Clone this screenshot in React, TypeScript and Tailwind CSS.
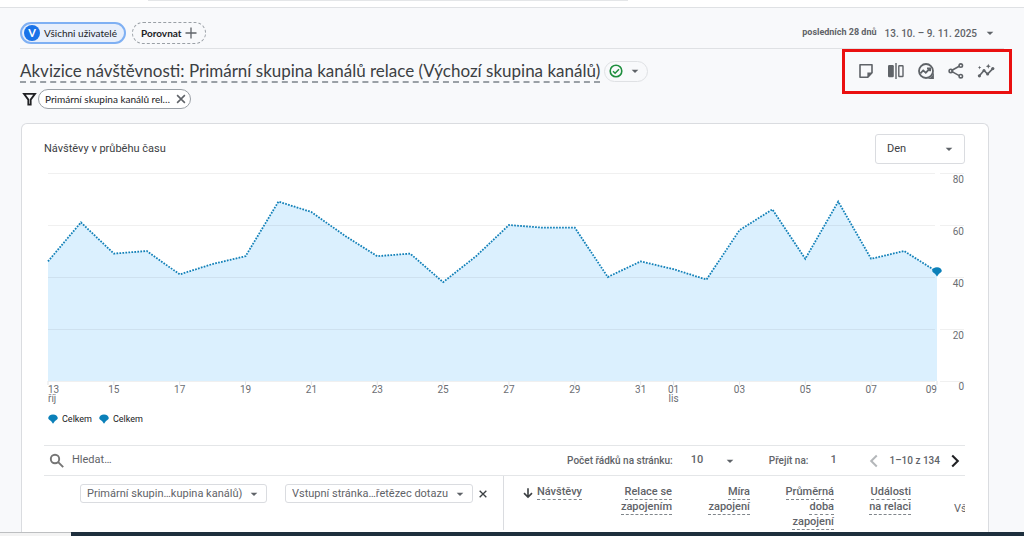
import React, { useState } from "react";
import { MdArrowDropDown } from "react-icons/md";
import clsx from "clsx";

interface DayValue {
  day: string;
  value: number;
  month?: string;
}

const visits: DayValue[] = [
  { day: "13", value: 46, month: "říj" },
  { day: "14", value: 61 },
  { day: "15", value: 49 },
  { day: "16", value: 50 },
  { day: "17", value: 41 },
  { day: "18", value: 45 },
  { day: "19", value: 48 },
  { day: "20", value: 69 },
  { day: "21", value: 65 },
  { day: "22", value: 56 },
  { day: "23", value: 48 },
  { day: "24", value: 49 },
  { day: "25", value: 38 },
  { day: "26", value: 48 },
  { day: "27", value: 60 },
  { day: "28", value: 59 },
  { day: "29", value: 59 },
  { day: "30", value: 40 },
  { day: "31", value: 46 },
  { day: "01", value: 43, month: "lis" },
  { day: "02", value: 39 },
  { day: "03", value: 58 },
  { day: "04", value: 66 },
  { day: "05", value: 47 },
  { day: "06", value: 69 },
  { day: "07", value: 47 },
  { day: "08", value: 50 },
  { day: "09", value: 42 },
];

// Marker shape shared by the last chart point and the legend
const MARKER = "M-4.8 -1C-4.6 -3 -2.8 -4.6 0 -4.6S4.6 -3 4.8 -1C4.8 .6 2.8 1.2 2 2L0 4.8L-2 2C-2.8 1.2 -4.8 .6 -4.8 -1Z";

const LEFT = 4;
const RIGHT = 893;
const BASE = 209;
const xAt = (i: number) => LEFT + (i * (RIGHT - LEFT)) / (visits.length - 1);
const yAt = (v: number) => BASE - v * 2.6;

const VisitsChart = () => {
  const line = visits.map((d, i) => `${xAt(i)},${yAt(d.value)}`).join(" ");

  return (
    <svg
      viewBox="0 0 921 236"
      className="block w-full"
      role="img"
      aria-label="Návštěvy v průběhu času"
    >
      <polygon
        points={`${LEFT},${BASE} ${line} ${RIGHT},${BASE}`}
        fill="#dbf0fe"
      />
      {[80, 60, 40, 20, 0].map((tick) => (
        <g key={tick}>
          <path
            d={`M${LEFT} ${yAt(tick) + 0.5}H${RIGHT - 2}M${RIGHT + 3} ${yAt(tick) + 0.5}H920`}
            stroke="#000"
            strokeOpacity="0.06"
          />
          <text
            x="920"
            y={tick === 0 ? 218 : yAt(tick) + 10}
            textAnchor="end"
            fontSize="10"
            fill="#6b6e73"
          >
            {tick}
          </text>
        </g>
      ))}
      <polyline
        points={line}
        fill="none"
        stroke="#1280b8"
        strokeWidth="1.8"
        strokeDasharray="1.7 1.3"
      />
      {visits.map((d, i) => {
        const last = i === visits.length - 1;
        // only odd days are labelled
        if (Number(d.day) % 2 === 0) return null;
        return (
          <g key={d.day + i} fontSize="10" fill="#6b6e73">
            <path d={`M${xAt(i)} ${BASE}v4`} stroke="#e3e5e8" />
            <text
              x={xAt(i)}
              y="221"
              textAnchor={i === 0 ? "start" : last ? "end" : "middle"}
            >
              {d.day}
            </text>
            {d.month && (
              <text
                x={xAt(i)}
                y="230"
                textAnchor={i === 0 ? "start" : "middle"}
              >
                {d.month}
              </text>
            )}
          </g>
        );
      })}
      <path
        d={MARKER}
        fill="#0b80b9"
        transform={`translate(${RIGHT} ${yAt(42)})`}
      />
    </svg>
  );
};

const LegendItem = ({ label }: { label: string }) => (
  <li className="flex items-center gap-1">
    <svg viewBox="-5 -5 10 10" className="size-[10px]" aria-hidden="true">
      <path d={MARKER} fill="#0b80b9" />
    </svg>
    {label}
  </li>
);

interface SelectBoxProps {
  label: string;
  value: string;
  className?: string;
  selectClassName?: string;
  caretClassName?: string;
}

const SelectBox = ({
  label,
  value,
  className,
  selectClassName,
  caretClassName = "right-1",
}: SelectBoxProps) => (
  <div className={clsx("relative", className)}>
    <select
      aria-label={label}
      defaultValue={value}
      className={clsx("size-full appearance-none outline-none", selectClassName)}
    >
      <option>{value}</option>
    </select>
    <MdArrowDropDown
      className={clsx(
        "pointer-events-none absolute top-1/2 size-4 -translate-y-1/2 text-[#5f6368]",
        caretClassName,
      )}
    />
  </div>
);

interface IconProps {
  children: React.ReactNode;
  className?: string;
  strokeWidth?: number;
}

// Line icon on an 18px grid
const Icon = ({ children, className, strokeWidth = 1.6 }: IconProps) => (
  <svg
    viewBox="0 0 18 18"
    className={clsx("shrink-0", className || "size-[18px]")}
    fill="none"
    stroke="currentColor"
    strokeWidth={strokeWidth}
    aria-hidden="true"
  >
    {children}
  </svg>
);

const CloseIcon = ({ className }: { className: string }) => (
  <Icon className={className} strokeWidth={2}>
    <path d="M4 4l10 10M14 4L4 14" />
  </Icon>
);

const tools = [
  {
    label: "Poznámky",
    icon: (
      <Icon>
        <path
          d="M3 2.8h12v8l-4.2 4.4H3z"
          strokeLinejoin="round"
        />
        <path d="M15.4 10.4h-5v5z" fill="currentColor" stroke="none" />
      </Icon>
    ),
  },
  {
    label: "Porovnání",
    icon: (
      <Icon strokeWidth={1.4}>
        <rect x="1" y="3" width="5.8" height="12.2" rx="1.2" fill="currentColor" stroke="none" />
        <path d="M9 1v16" />
        <rect x="11.8" y="3.7" width="4.2" height="10.8" rx="0.6" />
      </Icon>
    ),
  },
  {
    label: "Průzkum",
    icon: (
      <Icon strokeWidth={1.8}>
        <circle cx="9" cy="9" r="7" />
        <path d="M16.9 9.5v7.4H9.5c4-.3 6.8-3.3 7.4-7.4z" fill="currentColor" stroke="none" />
        <path d="M3.4 11.3l2.8-2.9 2.6 2.3 4-4M10 6.3h3.1v3" />
      </Icon>
    ),
  },
  {
    label: "Sdílet",
    icon: (
      <Icon>
        <path d="M12.2 4.2L5 8.2v1.4l7.2 4" />
        <circle cx="13.8" cy="3.6" r="1.7" />
        <circle cx="3.8" cy="8.9" r="1.7" />
        <circle cx="13.8" cy="14.2" r="1.7" />
      </Icon>
    ),
  },
  {
    label: "Statistiky",
    icon: (
      <Icon>
        <path d="M2.4 13.8L7 8.4l3.6 3.6 5.2-5.4" />
        <g fill="currentColor" stroke="none">
          <circle cx="2.4" cy="13.8" r="1.6" />
          <circle cx="7" cy="8.4" r="1.5" />
          <circle cx="10.6" cy="12" r="1.5" />
          <circle cx="15.8" cy="6.6" r="1.6" />
          <path d="M11.3 1.8l.7 1.8 1.8.7-1.8.7-.7 1.8-.7-1.8-1.8-.7 1.8-.7z" />
          <path d="M2.6 3.8l.5 1.3 1.3.5-1.3.5-.5 1.3-.5-1.3-1.3-.5 1.3-.5z" />
        </g>
      </Icon>
    ),
  },
];

const metrics = [
  { lines: ["Návštěvy"], sorted: true },
  { lines: ["Relace se", "zapojením"] },
  { lines: ["Míra", "zapojení"] },
  { lines: ["Průměrná", "doba", "zapojení"] },
  { lines: ["Události", "na relaci"] },
];

const ReportHeader = () => (
  <header className="font-['Lato',sans-serif]">
    <div className="mx-5 flex items-center justify-between border-b border-[#dfe1e4] pt-[14px] pb-1">
      <div className="flex gap-[6px] text-[10px] text-[#202124]">
        <button className="flex h-[22px] items-center gap-1 rounded-full border-2 border-[#7fb0f3] bg-[#e8effb] pr-[7px] pl-[2px]">
          <span className="flex size-4 items-center justify-center rounded-full bg-[#1a73e8] text-[11px] font-bold text-white">
            V
          </span>
          Všichni uživatelé
        </button>
        <button className="flex h-[22px] items-center gap-[3px] rounded-full border border-dashed border-[#9aa0a6] px-2 font-bold">
          Porovnat
          <svg viewBox="0 0 12 12" className="size-3" aria-hidden="true">
            <path d="M6 .5v11M.5 6h11" stroke="#5f6368" strokeWidth="1.3" />
          </svg>
        </button>
      </div>
      <button className="flex items-center gap-2 pr-[6px] font-['Roboto',sans-serif] text-[#5f6368]">
        <span className="text-[9px] font-bold">posledních 28 dnů</span>
        <span className="flex items-center gap-[5px] text-[10px] font-medium">
          13. 10. – 9. 11. 2025
          <MdArrowDropDown className="size-4" />
        </span>
      </button>
    </div>
    <div className="flex items-start justify-between pr-3 pl-5">
      <div className="pt-[11px]">
        <div className="flex items-center gap-1">
          <h1 className="text-[17px] leading-[22px] text-[#3c4043] underline decoration-[#9aa0a6] decoration-dashed decoration-2 underline-offset-4 [text-decoration-skip-ink:none]">
            Akvizice návštěvnosti: Primární skupina kanálů relace (Výchozí
            skupina kanálů)
          </h1>
          <button
            aria-label="Kvalita dat"
            className="flex h-[21px] items-center gap-1 rounded-full border border-[#dfe1e4] px-1"
          >
            <svg viewBox="0 0 14 14" className="size-[14px]" fill="none">
              <circle cx="7" cy="7" r="5.8" stroke="#1e8e3e" strokeWidth="1.6" />
              <path
                d="M4 7.2l2.1 2L10 5.2"
                stroke="#1e8e3e"
                strokeWidth="1.5"
              />
            </svg>
            <MdArrowDropDown className="size-4 text-[#5f6368]" />
          </button>
        </div>
        <div className="mt-[7px] flex items-center">
          <Icon className="size-[18px] text-[#202124]" strokeWidth={1.8}>
            <path d="M4 3.9h11L10.7 9.6v5H8.3v-5z" />
          </Icon>
          <div className="flex h-5 items-center gap-1 rounded-full border border-[#9aa0a6] bg-white pr-[2px] pl-[6px] text-[10px] text-[#202124]">
            Primární skupina kanálů rel…
            <button aria-label="Odebrat filtr" className="text-[#5f6368]">
              <CloseIcon className="size-[14px]" />
            </button>
          </div>
        </div>
      </div>
      <div className="flex h-[45px] items-center border-[3px] border-[#ea1010] pr-2 pb-[2px] pl-[6px] text-[#5f6368]">
        {tools.map((tool) => (
          <button
            key={tool.label}
            aria-label={tool.label}
            className="flex w-[30px] justify-center"
          >
            {tool.icon}
          </button>
        ))}
      </div>
    </div>
  </header>
);

const TableToolbar = () => {
  const [search, setSearch] = useState("");
  const [page, setPage] = useState("1");

  return (
    <div className="flex h-[31px] items-center border-y border-[#e4e6e8] text-[10px] font-medium text-[#5f6368]">
      <label className="flex flex-1 items-center gap-[6px] pl-1">
        <Icon className="size-[18px] text-[#757575]" strokeWidth={1.9}>
          <circle cx="7" cy="7" r="4.2" />
          <path d="M10.2 10.2l5 5" />
        </Icon>
        <input
          type="text"
          value={search}
          onChange={(e) => setSearch(e.target.value)}
          placeholder="Hledat…"
          aria-label="Hledat"
          className="w-full text-[11px] font-normal outline-none placeholder:text-[#5f6368]"
        />
      </label>
      <span>Počet řádků na stránku:</span>
      <SelectBox
        label="Počet řádků na stránku"
        value="10"
        className="ml-[18px] h-5 w-[50px]"
        selectClassName="text-[11px]"
        caretClassName="right-[3px]"
      />
      <label className="ml-[28px] flex items-center gap-[20px]">
        Přejít na:
        <input
          type="text"
          value={page}
          onChange={(e) => setPage(e.target.value)}
          className="w-[36px] pl-[2px] text-[11px] outline-none"
        />
      </label>
      <button aria-label="Předchozí stránka" className="text-[#b4b7ba]">
        <Icon className="size-5" strokeWidth={1.8}>
          <path d="M11.5 4L6.5 9l5 5" />
        </Icon>
      </button>
      <span className="mx-[5px]">1–10 z 134</span>
      <button aria-label="Další stránka" className="text-[#202124]">
        <Icon className="size-5" strokeWidth={1.9}>
          <path d="M6.5 4l5 5-5 5" />
        </Icon>
      </button>
    </div>
  );
};

const ReportTable = () => (
  <table className="w-full table-fixed text-[11px] leading-[14px] text-[#5f6368]">
    <colgroup>
      <col />
      <col className="w-[79px]" />
      <col className="w-[90px]" />
      <col className="w-[78px]" />
      <col className="w-[84px]" />
      <col className="w-[77px]" />
      <col className="w-[54px]" />
    </colgroup>
    <thead>
      <tr>
        <th className="border-r border-[#dadce0] pt-2 pl-[36px] align-top font-normal">
          <div className="flex items-center">
            <SelectBox
              label="Primární dimenze"
              value="Primární skupin…kupina kanálů)"
              className="h-[19px] w-[187px] rounded-[3px] border border-[#dadce0]"
              selectClassName="pl-[6px]"
            />
            <SelectBox
              label="Sekundární dimenze"
              value="Vstupní stránka…řetězec dotazu"
              className="ml-[18px] h-[19px] w-[188px] rounded-[3px] border border-[#dadce0]"
              selectClassName="pl-[6px]"
            />
            <button aria-label="Odebrat dimenzi" className="ml-1 text-[#3c4043]">
              <CloseIcon className="size-3" />
            </button>
          </div>
        </th>
        {metrics.map((metric) => (
          <th
            key={metric.lines[0]}
            className="pt-[9px] text-right align-top font-medium"
          >
            {metric.lines.map((line) => (
              <div key={line} className="flex items-center justify-end gap-[3px]">
                {metric.sorted && (
                  <Icon className="size-3 text-[#3c4043]" strokeWidth={2.4}>
                    <path d="M9 2v13M3 9.2l6 6 6-6" />
                  </Icon>
                )}
                <span className="border-b border-dashed border-[#80868b]">
                  {line}
                </span>
              </div>
            ))}
          </th>
        ))}
        <th className="overflow-hidden pt-[26px] pl-[43px] text-left align-top font-normal whitespace-nowrap">
          Vš
        </th>
      </tr>
    </thead>
  </table>
);

export default function App() {
  return (
    <div className="flex h-screen flex-col overflow-hidden bg-[#f8f9fb] font-['Roboto',sans-serif]">
      <div className="h-2 shrink-0 border-b border-[#dfe1e4] bg-white">
        <div className="ml-[148px] w-[480px] border-t border-[#e4e6e8]" />
      </div>
      <ReportHeader />
      <main className="mt-[14px] mr-[35px] ml-[21px] min-h-0 flex-1 overflow-hidden rounded-t-md border border-b-0 border-[#dadce0] bg-white pt-[10px] pr-[23px] pl-[22px]">
        <div className="flex items-center justify-between">
          <h2 className="text-[11px] text-[#3c4043]">
            Návštěvy v průběhu času
          </h2>
          <SelectBox
            label="Období"
            value="Den"
            className="h-[30px] w-[90px] rounded-[3px] border border-[#dadce0] text-[#3c4043]"
            selectClassName="pl-[11px] text-[11px]"
            caretClassName="right-[7px]"
          />
        </div>
        <div className="mt-2">
          <VisitsChart />
        </div>
        <ul className="mt-[3px] mb-[18px] ml-1 flex gap-[7px] text-[9px] leading-4 text-[#202124]">
          <LegendItem label="Celkem" />
          <LegendItem label="Celkem" />
        </ul>
        <TableToolbar />
        <ReportTable />
      </main>
      <footer className="flex h-1 shrink-0">
        <div className="w-[71px] border-t border-[#bdbfc1] bg-[#f3f3f3]" />
        <div className="flex-1 bg-[#1e2f3d]" />
      </footer>
    </div>
  );
}
